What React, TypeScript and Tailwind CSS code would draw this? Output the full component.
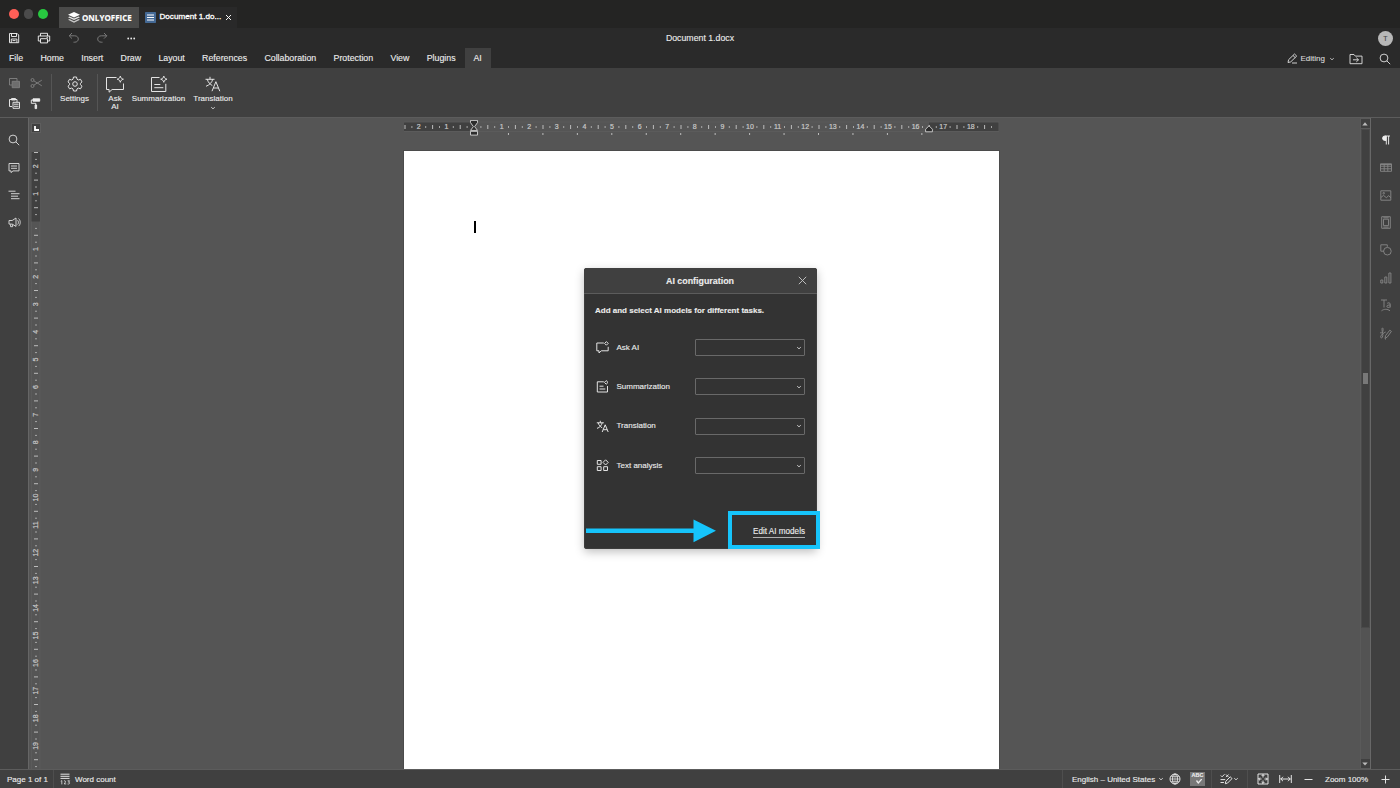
import type { ReactNode } from 'react'

interface IconProps { w: number; h: number; children: ReactNode; className?: string }

function Icon({ w, h, children, className = '' }: IconProps) {
  return (
    <svg
      width={w}
      height={h}
      viewBox={`0 0 ${w} ${h}`}
      fill="none"
      stroke="currentColor"
      strokeWidth={0.95}
      className={`shrink-0 ${className}`}
    >
      {children}
    </svg>
  )
}

const Chevron = ({ className = '' }: { className?: string }) => (
  <Icon w={6} h={4} className={className}><path d="M1.2 1.2L3 2.8l1.8-1.6" strokeWidth=".8" /></Icon>
)

const SearchIcon = () => (
  <Icon w={12} h={12}><circle cx="5" cy="5" r="3.9" /><path d="M7.8 7.8l3.4 3.4" /></Icon>
)

const AskIcon = () => (
  <Icon w={20} h={18}>
    <path d="M11.5 2.5h-10v12h2.6v2.7l3-2.7h11.4V8.5" />
    <path d="M15.3 1.1c.4 1.8 1.3 2.7 3.1 3.1-1.8.4-2.7 1.3-3.1 3.1-.4-1.8-1.3-2.7-3.1-3.1 1.8-.4 2.7-1.3 3.1-3.1z" />
  </Icon>
)

const SummaryIcon = () => (
  <Icon w={18} h={18}>
    <path d="M9.5 2.5H1.5v14h14.3V8.8M4.3 9.5h6M4.3 12.7h9" />
    <path d="M13.8 1.1c.4 1.8 1.3 2.7 3.1 3.1-1.8.4-2.7 1.3-3.1 3.1-.4-1.8-1.3-2.7-3.1-3.1 1.8-.4 2.7-1.3 3.1-3.1z" />
  </Icon>
)

const TranslateIcon = () => (
  <Icon w={16} h={16}>
    <path d="M.5 3.3h9M5 .8v2.5M2.3 3.3c.7 3 2.7 5 5 6.2M7.7 3.3c-.7 3.2-3.3 5.7-6.7 7" />
    <path d="M7 15.2l3.9-9.5 3.9 9.5M8.4 12h5" />
  </Icon>
)

const SettingsIcon = () => (
  <Icon w={16} h={16}>
    <path d="M6.5 1h3l.5 2.2 1.4.8 2.1-.7 1.5 2.6-1.6 1.5v1.3l1.6 1.5-1.5 2.6-2.1-.7-1.4.8-.5 2.1h-3L6 12.9l-1.4-.8-2.1.7L1 10.2l1.6-1.5V7.4L1 5.9l1.5-2.6 2.1.7L6 3.2z" />
    <circle cx="8" cy="8" r="2.3" />
  </Icon>
)

const leftIcons: ReactNode[] = [
  <SearchIcon />,
  <Icon w={12} h={12}><path d="M1 1.5h10v7.4H5L3 10.6V8.9H1zM3 4h6M3 6.3h6" /></Icon>,
  <Icon w={12} h={10}><path d="M.5 1.2h7M3 3.7h8.5M3 6.2h7M3 8.7h8.5" /></Icon>,
  <Icon w={13} h={11}>
    <path d="M1 3.5h3.2L8 1v8.4L4.2 7.1H1zM2.6 7.3v2.4h2V7.4M9.6 3.3c1.1 1 1.1 3.2 0 4.2M10.6 1.6c2.2 1.9 2.2 5.6 0 7.5" />
  </Icon>,
]

const rightIcons: ReactNode[] = [
  <Icon w={10} h={10} className="text-[#eee]"><path d="M4.5 1H9M5.3 1v8.5M7.6 1v8.5" /><path d="M5 1H3.8a2.2 2.2 0 000 4.4H5z" fill="currentColor" /></Icon>,
  <Icon w={12} h={9}><path d="M.5.8h11v7.5H.5zM.5 3.2h11M.5 5.8h11M4.2 1v7.3M7.8 1v7.3" /><path d="M.5 1.5h11" /></Icon>,
  <Icon w={12} h={11}><path d="M.8.8h10v9.4H.8zM1 7.4l2.5-2 3 2.4 2-2.2L11 7.8" /><circle cx="3.7" cy="3.2" r=".8" /></Icon>,
  <Icon w={10} h={13}><path d="M.7.7h8.6v11.6H.7zM2.5 3.2h5v6.4h-5zM2.3 1.8h5.4M2.3 11.1h5.4" /></Icon>,
  <Icon w={12} h={12}><path d="M4 7.2H.8V.8h6.5v2" /><circle cx="7.4" cy="7.2" r="3.8" /></Icon>,
  <Icon w={12} h={12}><path d="M.8 8h2v3h-2zM4.8 5h2v6h-2zM8.9 1h2v10h-2z" /></Icon>,
  <Icon w={12} h={13}>
    <path d="M1 1h6M4 1v7.5M7.2 4.3c1-.8 3-.7 3 .8v3.4M10.2 6c-2 0-3.3.2-3.3 1.4 0 1.5 2.6 1.4 3.3.1M1.5 11.8c2.5-2 6-2 8.5 0" />
  </Icon>,
  <Icon w={13} h={13}>
    <path d="M1 5.5c2 1.5 3.5-1 3-4-.2-1-1.2-.5-1 1 .2 3 1.4 5.5.4 7.7-.5 1.2-2 .8-1.7-.6.4-2 3.3-4 5-4.6" />
    <path d="M6 11.5l.6-3 4.2-5.3 1.6 1.2-4 5.5zM6 12h1" />
  </Icon>,
]

const CM = 27.6
const range = (from: number, to: number) => Array.from({ length: to - from + 1 }, (_, i) => from + i)

function Marks({ from, to, zero, vertical = false }: { from: number; to: number; zero: number; vertical?: boolean }) {
  return (
    <>
      {range(from, to).map((q) => {
        const p = zero + (q * CM) / 4
        const n = Math.abs(q / 4)
        if (q === 0) return null
        if (q % 4 === 0) {
          return (
            <text
              key={q}
              x={vertical ? 0 : p}
              y={vertical ? 0 : 7.4}
              transform={vertical ? `translate(7.3 ${p}) rotate(-90)` : undefined}
              textAnchor="middle"
              fontSize="7"
              fill="#c8c8c8"
              stroke="#c8c8c8"
              strokeWidth=".2"
            >
              {n}
            </text>
          )
        }
        const len = q % 2 === 0 ? 4 : 1.6
        return vertical
          ? <rect key={q} x={5 - len / 2} y={p - 0.5} width={len} height="1" fill="#bcbcbc" />
          : <rect key={q} x={p - 0.5} y={5 - len / 2} width="1" height={len} fill="#bcbcbc" />
      })}
    </>
  )
}

function HorizontalRuler() {
  return (
    <svg width="595" height="18" viewBox="0 -2 595 18" className="block">
      <rect x="0" y="0" width="595" height="9.5" fill="#555" stroke="#626262" strokeWidth=".5" />
      <rect x="0" y="0.5" width="70" height="8.5" fill="#404040" />
      <rect x="525" y="0.5" width="69.5" height="8.5" fill="#404040" />
      <Marks from={-10} to={75} zero={70} />
      {range(1, 13).map((i) => (
        <rect key={i} x={69.5 + i * 34.45} y="11" width="1" height="2" fill="#bcbcbc" />
      ))}
      <g fill="#2b2b2b" stroke="#d4d4d4" strokeWidth=".9">
        <path d="M66.5-1.6h7V.6L70.6 4.6l2.9 3.8H66.5L69.4 4.6 66.5.6z" />
        <path d="M66.5 9.3h7v3.8h-7z" />
        <path d="M521.6 9.8V7.2L525 3.8l3.4 3.4v2.6z" />
      </g>
    </svg>
  )
}

function VerticalRuler() {
  return (
    <svg width="10" height="617" viewBox="0 0 10 617" className="block">
      <rect x=".5" y="0" width="8.5" height="620" fill="#555" stroke="#626262" strokeWidth=".5" />
      <rect x=".5" y="0" width="8.5" height="69.5" fill="#404040" />
      <Marks from={-10} to={79} zero={69.5} vertical />
    </svg>
  )
}

const menu = ['File', 'Home', 'Insert', 'Draw', 'Layout', 'References', 'Collaboration', 'Protection', 'View', 'Plugins']

function TitleBar() {
  return (
    <div className="h-7 flex items-end bg-[#242423]">
      <div className="w-[59px] h-7 pl-[9px] flex items-center gap-[5px]">
        <span className="size-[9.5px] rounded-full bg-[#fe5f57]" />
        <span className="size-[9.5px] rounded-full bg-[#4b4b4b]" />
        <span className="size-[9.5px] rounded-full bg-[#28c840]" />
      </div>
      <div className="w-[79.5px] h-[21px] bg-[#4a4a49] pl-[8.5px] flex items-center gap-[2.5px]">
        <svg width="12" height="11" viewBox="0 0 12 11" fill="#fff">
          <path d="M6 0l6 2.7-6 2.8-6-2.8z" />
          <path d="M0 5.2l1.6-.7L6 6.6l4.4-2.1 1.6.7L6 8z" opacity=".85" />
          <path d="M0 7.8l1.6-.7L6 9.2l4.4-2.1 1.6.7L6 10.7z" opacity=".7" />
        </svg>
        <span className="font-['Open_Sans'] font-bold text-[8px] text-white">ONLYOFFICE</span>
      </div>
      <div className="w-[98px] h-[21px] bg-[#292929] pl-[6.5px] flex items-center">
        <svg width="11" height="11" viewBox="0 0 11 11">
          <rect width="11" height="11" rx=".7" fill="#446995" />
          <path d="M2 3h7M2 5.5h7M2 8h7" stroke="#fff" />
        </svg>
        <span className="w-[62px] ml-[3.5px] text-[8.1px] text-white whitespace-nowrap [-webkit-text-stroke:0.3px_white]">Document 1.do...</span>
        <Icon w={7} h={7} className="ml-[3.5px] text-white"><path d="M1 1l5 5M6 1L1 6" /></Icon>
      </div>
    </div>
  )
}

function Header() {
  return (
    <div className="h-10 bg-[#2a2a2a] text-[#ececec]">
      <div className="h-5 grid grid-cols-3 items-center">
        <div className="pl-2 flex items-center">
          <Icon w={12} h={12}><path d="M1.5 1.5h7.7l1.5 1.5v7.7H1.5zM3.5 1.5v3h5v-3M3.3 10.7V7h5.6v3.7M4.5 8.6h3" /></Icon>
          <Icon w={14} h={12} className="ml-[17px]"><path d="M3.5 4V1.3h7V4M3.5 9H1.3V4h11.4v5h-2.2M3.5 6.7h7v4.2h-7zM9.5 5.3h1.5" /></Icon>
          <Icon w={12} h={12} className="ml-[16.5px] text-[#7c7c7c]"><path d="M4 1L1.2 3.8 4 6.6M1.3 3.8h5.4c4.8 0 4.8 6.4 0 6.4H5.5" /></Icon>
          <Icon w={12} h={12} className="ml-4 text-[#7c7c7c]"><path d="M8 1l2.8 2.8L8 6.6M10.7 3.8H5.3c-4.8 0-4.8 6.4 0 6.4h1.2" /></Icon>
          <svg width="9" height="3" viewBox="0 0 9 3" className="ml-[19.5px]" fill="#ececec">
            <circle cx="1.2" cy="1.5" r=".9" /><circle cx="4.2" cy="1.5" r=".9" /><circle cx="7.2" cy="1.5" r=".9" />
          </svg>
        </div>
        <span className="text-center text-[8.75px]">Document 1.docx</span>
        <div className="flex justify-end pr-[7px]">
          <span className="size-[15px] rounded-full bg-[#b8b8b8] text-[#444] text-[7px] flex items-center justify-center">T</span>
        </div>
      </div>
      <div className="h-5 flex justify-between">
        <div className="flex items-center pl-[9px] gap-[17.3px] text-[8.8px]">
          {menu.map((m) => <span key={m}>{m}</span>)}
          <span className="h-5 w-[26px] -ml-[8.3px] bg-[#404040] flex items-center justify-center">AI</span>
        </div>
        <div className="flex items-center pt-px pr-[9px] text-[8px] text-[#d8d8d8]">
          <Icon w={11} h={11}><path d="M1 9.5l.6-2.8L7.5 1l2.2 2.1-6 5.8zM6 2.5l2.2 2.1M5 10h5" /></Icon>
          <span className="ml-[3px]">Editing</span>
          <Chevron className="ml-[4px]" />
          <Icon w={14} h={12} className="ml-[14px]"><path d="M1 1.5h4l1.3 1.6H13v7.6H1zM4 6.8h5.5M7.3 4.7l2.2 2.1-2.2 2.1" /></Icon>
          <span className="ml-4"><SearchIcon /></span>
        </div>
      </div>
    </div>
  )
}

function Ribbon() {
  return (
    <div className="h-[50px] bg-[#404040] border-b border-[#5c5c5c] flex items-start text-[8px] leading-[8px] text-[#ececec]">
      <div className="w-[51px] pt-[9px] pl-[8px] grid grid-cols-[22px_13px] auto-rows-[20px]">
        <Icon w={13} h={12} className="text-[#7e7e7e]"><path d="M4 8H1.5V1.5H9V4" /><path d="M4.2 4.3h7.3v6.4H4.2z" fill="#6e6e6e" /></Icon>
        <Icon w={13} h={12} className="text-[#7e7e7e]"><circle cx="2.5" cy="3" r="1.5" /><circle cx="2.5" cy="9" r="1.5" /><path d="M3.8 3.8l8 5M3.8 8.2l8-5" /></Icon>
        <Icon w={13} h={13}><path d="M4 9.5H1.5V2.5H9V5M3.5 1.5h4v1.5h-4z" /><path d="M5 5.3h6.5v6H5z" fill="#404040" /><path d="M6 7.2h4.5M6 9.3h4.5" /></Icon>
        <Icon w={13} h={13}><path d="M3 1.8h6.7v2.4H3z" fill="currentColor" /><path d="M3 3H1.3v3.3h4.5V8" /><path d="M5.1 8h1.5v3.6H5.1z" fill="currentColor" /></Icon>
      </div>
      <span className="w-px h-[37px] mt-[6px] bg-[#555]" />
      <div className="w-[45px] pt-2 flex flex-col items-center gap-[3px]"><SettingsIcon /><span>Settings</span></div>
      <span className="w-px h-[37px] mt-[6px] bg-[#555]" />
      <div className="w-[34px] pt-[7px] flex flex-col items-center gap-[2px]">
        <AskIcon />
        <span className="text-center">Ask<br />AI</span>
      </div>
      <div className="w-[53px] pt-[7px] flex flex-col items-center gap-[2px]"><SummaryIcon /><span>Summarization</span></div>
      <div className="w-[56px] pt-[8px] flex flex-col items-center gap-[3px]">
        <TranslateIcon />
        <span>Translation</span>
        <Chevron />
      </div>
    </div>
  )
}

function ScrollBar() {
  return (
    <div className="w-[11px] flex flex-col items-center bg-[#5a5a5a] border-r border-[#686868]">
      <span className="w-[9px] h-[9px] mt-px bg-[#404040] flex items-center justify-center">
        <svg width="6" height="4" viewBox="0 0 6 4"><path d="M3 .3L5.7 3.5H.3z" fill="#bbb" /></svg>
      </span>
      <span className="w-[9px] h-[499px] mt-px bg-[#404040] border border-[#4a4a4a] flex items-center justify-center">
        <span className="w-[5px] h-[11px] bg-[#787878]" />
      </span>
      <span className="w-[9px] flex-1 bg-[#535353]" />
      <span className="w-[9px] h-[9px] mb-px bg-[#404040] flex items-center justify-center">
        <svg width="6" height="4" viewBox="0 0 6 4"><path d="M3 3.6L5.7.4H.3z" fill="#bbb" /></svg>
      </span>
    </div>
  )
}

function Workspace() {
  return (
    <div className="flex-1 min-h-0 flex overflow-hidden">
      <div className="w-[29px] bg-[#404040] border-r border-[#666] pt-[8px] text-[#d8d8d8]">
        {leftIcons.map((icon, i) => (
          <div key={i} className="h-[27.7px] flex items-center justify-center">{icon}</div>
        ))}
      </div>
      <div className="w-[13px] flex flex-col items-center pl-[1px]">
        <span className="size-[10px] shrink-0 mt-[5px] mb-[19px] bg-[#404040] border border-[#5e5e5e] flex items-center justify-center">
          <svg width="5" height="5" viewBox="0 0 5 5"><path d="M1 0v4h4" fill="none" stroke="#fff" strokeWidth="1.8" /></svg>
        </span>
        <VerticalRuler />
      </div>
      <div className="flex-1 flex flex-col pl-[362px]">
        <div className="h-[33px] pt-[2px]"><HorizontalRuler /></div>
        <div className="w-[595px] flex-1 bg-white pt-[70px] pl-[70px] shadow-[0_0_0_1px_#4b4b4b]">
          <div className="w-[1.5px] h-[12px] bg-black" />
        </div>
      </div>
      <ScrollBar />
      <div className="w-[29px] bg-[#404040] pt-[8px] text-[#858585]">
        {rightIcons.map((icon, i) => (
          <div key={i} className="h-[27.65px] flex items-center justify-center">{icon}</div>
        ))}
      </div>
    </div>
  )
}

function StatusBar() {
  return (
    <div className="h-[19px] shrink-0 border-t border-[#5c5c5c] bg-[#404040] flex items-center text-[8px] text-[#ececec]">
      <span className="w-[53px] pl-[7px] pt-px">Page 1 of 1</span>
      <span className="w-px h-[18px] bg-[#4e4e4e]" />
      <Icon w={11} h={12} className="ml-[6px]">
        <path d="M.5 1.2h9M.5 3.3h9M.5 5.4h9" />
        <path d="M.8 8.2l1-.6v3.8M4 7.9c1.8-.6 2 1 .2 3h2M7.6 7.8h2L8.5 9.2c1.8 0 1.5 2.2-.9 1.8" strokeWidth=".75" />
      </Icon>
      <span className="ml-[4px] pt-px">Word count</span>
      <div className="ml-auto flex items-center h-[18px]">
        <span className="w-px h-[18px] bg-[#4e4e4e]" />
        <span className="w-[95px] pl-[9px] pt-px whitespace-nowrap">English – United States</span>
        <Chevron />
        <Icon w={12} h={12} className="ml-[5px]">
          <circle cx="6" cy="6" r="5" /><ellipse cx="6" cy="6" rx="2.4" ry="5" /><path d="M1 6h10M6 1v10M1.8 3.4h8.4M1.8 8.6h8.4" strokeWidth=".6" />
        </Icon>
        <span className="w-[15px] h-[14px] ml-[9px] bg-[#787878] flex flex-col items-center justify-start">
          <span className="text-[5.5px] leading-[7px] font-bold">ABC</span>
          <Icon w={8} h={6}><path d="M2.5 1.5l1.8 2.4L7.8 0" strokeWidth="1.3" /></Icon>
        </span>
        <span className="w-px h-[18px] ml-[6px] bg-[#4e4e4e]" />
        <Icon w={13} h={12} className="ml-[8px]">
          <path d="M.8 2.5l1.3 1.3L4.5 1.3M6 1.5l2.6 2.6M8.6 1.5L6 4.1M.5 6.6h4.7M.5 9.5h3.4M5.3 10.7l.5-2.4 4.4-4.5 1.8 1.8-4.5 4.5z" />
        </Icon>
        <Chevron />
        <span className="w-px h-[18px] ml-[8px] bg-[#4e4e4e]" />
        <Icon w={12} h={12} className="ml-[9px]">
          <path d="M1 1h10v10H1z" />
          <path d="M6 1.5v3M4.6 3L6 1.6 7.4 3M6 10.5v-3M4.6 9L6 10.4 7.4 9M1.5 6h3M3 4.6L1.6 6 3 7.4M10.5 6h-3M9 4.6L10.4 6 9 7.4" />
        </Icon>
        <Icon w={13} h={10} className="ml-[10px]"><path d="M.7 1v8M12.3 1v8M1.5 5h10M4 2.8L1.8 5 4 7.2M9 2.8L11.2 5 9 7.2" /></Icon>
        <Icon w={9} h={9} className="ml-[12px]"><path d="M.5 4.5h8" /></Icon>
        <span className="ml-[12px] w-[44px] pt-px whitespace-nowrap">Zoom 100%</span>
        <Icon w={9} h={9} className="ml-[12px] mr-[10px]"><path d="M.5 4.5h8M4.5.5v8" /></Icon>
      </div>
    </div>
  )
}

const tasks: { label: string; icon: ReactNode }[] = [
  {
    label: 'Ask AI',
    icon: <Icon w={14} h={13}><path d="M7.8 2H.8v7.8h2.2v2.2l2.3-2.2h6.9V5.8M10.4.6L12.2 2.4l-1.8 1.8-1.8-1.8z" /></Icon>,
  },
  {
    label: 'Summarization',
    icon: <Icon w={14} h={13}><path d="M7.8 1.8H1.3v10.2h10.2V6M3.5 6.2h4M3.5 9h5.8M10.2.6L12 2.4l-1.8 1.8-1.8-1.8z" /></Icon>,
  },
  {
    label: 'Translation',
    icon: (
      <Icon w={14} h={13}>
        <path d="M.8 2.8h7M4.3.8v2M2.2 2.8c.6 2.4 2 3.9 4 5M6.2 2.8c-.6 2.6-2.4 4.6-5.2 5.6M6.2 12l3-7.2 3 7.2M7.3 9.7h3.8" />
      </Icon>
    ),
  },
  {
    label: 'Text analysis',
    icon: <Icon w={14} h={13}><path d="M1.3 1.5h3.8v3.8H1.3zM1.3 7.7h3.8v3.8H1.3zM7.7 7.7h3.8v3.8H7.7zM9.6.8l2.6 2.6L9.6 6 7 3.4z" /></Icon>,
  },
]

function AiDialog() {
  return (
    <div className="absolute left-[583.5px] top-[268px] w-[233px] h-[281px] rounded-[3px] bg-[#333] text-[8px] text-[#ececec] shadow-[0_3px_10px_rgba(0,0,0,0.25)] ring-1 ring-inset ring-[#3d3d3d]">
      <div className="h-[26px] rounded-t-[3px] bg-[#404040] border-b border-[#5c5c5c] grid grid-cols-[1fr_auto_1fr] items-center">
        <span className="col-start-2 pt-[2px] text-[8.9px] font-bold">AI configuration</span>
        <Icon w={9} h={9} className="justify-self-end mr-[10px] text-[#c4c4c4]"><path d="M.8.8l7.4 7.4M8.2.8L.8 8.2" /></Icon>
      </div>
      <p className="pt-[11px] pl-[11.5px] leading-[12px] font-bold whitespace-nowrap">Add and select AI models for different tasks.</p>
      <div className="pt-[22px] px-[12px] flex flex-col gap-[22.4px]">
        {tasks.map((task) => (
          <div key={task.label} className="h-[17px] flex items-center">
            {task.icon}
            <span className="ml-[7px] w-[79px] [-webkit-text-stroke:0.12px_#ececec]">{task.label}</span>
            <span className="w-[110px] h-[17px] shrink-0 rounded-[1px] border border-[#696969] flex items-center justify-end pr-[2px]">
              <Chevron />
            </span>
          </div>
        ))}
      </div>
      <div className="mt-[52px] pr-[11.5px] flex justify-end">
        <span className="leading-[11px] text-[8.15px] border-b border-[#b0b0b0] [-webkit-text-stroke:0.12px_#ececec]">Edit AI models</span>
      </div>
    </div>
  )
}

export default function App() {
  return (
    <div className="relative w-[1400px] h-[788px] flex flex-col overflow-hidden bg-[#555] font-['Liberation_Sans',sans-serif] leading-none [-webkit-text-stroke-width:0.12px]">
      <TitleBar />
      <Header />
      <Ribbon />
      <Workspace />
      <StatusBar />
      <AiDialog />
      <svg className="absolute left-[586px] top-[519px]" width="131" height="24" viewBox="0 0 131 24" fill="#16c4fb">
        <path d="M0 9.4h107.5V.5L130 11.8 107.5 23.2V14H0z" />
      </svg>
      <div className="absolute left-[728px] top-[511px] w-[92px] h-[38px] border-[4.5px] border-[#16c4fb]" />
    </div>
  )
}
